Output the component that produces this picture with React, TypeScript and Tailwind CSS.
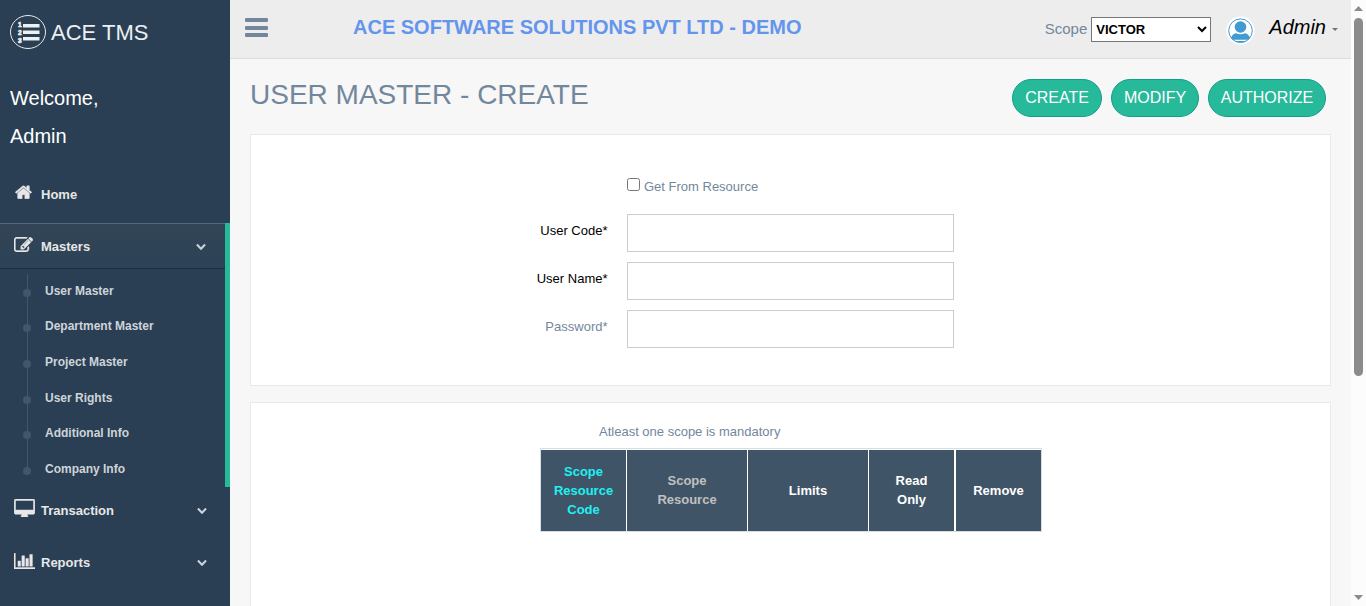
import React from "react";

type IconProps = { className?: string };

const HomeIcon = ({ className }: IconProps) => (
  <svg viewBox="64 188 1664 1380" preserveAspectRatio="none" className={className} fill="currentColor" stroke="currentColor" strokeWidth="40">
    <path d="M1472 992v480q0 26-19 45t-45 19h-384v-384h-256v384h-384q-26 0-45-19t-19-45v-480q0-1 .5-3t.5-3l575-474 575 474q1 2 1 6zm223-69l-62 74q-8 9-21 11h-3q-13 0-21-7l-692-577-692 577q-12 8-24 7-13-2-21-11l-62-74q-8-10-7-23.5t11-21.5l719-599q32-26 76-26t76 26l244 204v-195q0-14 9-23t23-9h192q14 0 23 9t9 23v408l219 182q10 8 11 21.5t-7 23.5z" />
  </svg>
);

const EditIcon = ({ className }: IconProps) => (
  <svg viewBox="0 128 1792 1408" className={className} fill="currentColor" stroke="currentColor" strokeWidth="40">
    <path d="M888 1184l116-116-152-152-116 116v56h96v96h56zm440-720q-16-16-33 1l-350 350q-17 17-1 33t33-1l350-350q17-17 1-33zm80 594v190q0 119-84.5 203.5t-203.5 84.5h-832q-119 0-203.5-84.5t-84.5-203.5v-832q0-119 84.5-203.5t203.5-84.5h832q63 0 117 25 15 7 18 23 3 17-9 29l-49 49q-14 14-32 8-23-6-45-6h-832q-66 0-113 47t-47 113v832q0 66 47 113t113 47h832q66 0 113-47t47-113v-126q0-13 9-22l64-64q15-15 35-7t20 29zm-96-738l288 288-672 672h-288v-288zm444 132l-92 92-288-288 92-92q28-28 68-28t68 28l152 152q28 28 28 68t-28 68z" />
  </svg>
);

const DesktopIcon = ({ className }: IconProps) => (
  <svg viewBox="0 0 1920 1664" className={className} fill="currentColor" stroke="currentColor" strokeWidth="50">
    <path d="M1792 992v-832q0-13-9.500-22.500t-22.500-9.500h-1600q-13 0-22.500 9.500t-9.500 22.500v832q0 13 9.500 22.500t22.500 9.500h1600q13 0 22.500-9.500t9.500-22.500zm128-832v1088q0 66-47 113t-113 47h-544q0 37 16 77.500t32 71 16 43.500q0 26-19 45t-45 19h-512q-26 0-45-19t-19-45q0-14 16-44t32-70 16-78h-544q-66 0-113-47t-47-113v-1088q0-66 47-113t113-47h1600q66 0 113 47t47 113z" />
  </svg>
);

const ChartIcon = ({ className }: IconProps) => (
  <svg viewBox="0 128 2048 1536" className={className} fill="currentColor" stroke="currentColor" strokeWidth="45">
    <path d="M640 896v512h-256v-512h256zm384-512v1024h-256v-1024h256zm1024 1152v128h-2048v-1536h128v1408h1920zm-640-896v768h-256v-768h256zm384-384v1152h-256v-1152h256z" />
  </svg>
);

const ChevronIcon = ({ className }: IconProps) => (
  <svg viewBox="90 533 1612 1035" className={`text-[#ccd3da] ${className}`} fill="currentColor">
    <path d="M1683 808l-742 741q-19 19-45 19t-45-19l-742-741q-19-19-19-45.500t19-45.500l166-165q19-19 45-19t45 19l531 531 531-531q19-19 45-19t45 19l166 165q19 19 19 45.500t-19 45.500z" />
  </svg>
);

const Logo = () => (
  <svg width="36" height="34" viewBox="0 0 36 34" fill="none" className="shrink-0">
    <ellipse cx="18" cy="17" rx="17.500" ry="16.500" stroke="#eaeaea" />
    <path d="M13 9h16.500v3.500H13zM13 15.500h16.500v3.500H13zM13 22h16.500v3.500H13z" fill="#ecf0f1" />
    <g fill="#ecf0f1" stroke="#ecf0f1" strokeWidth="0.6" fontFamily="Liberation Sans" fontWeight="700" fontSize="6.600">
      <text x="8" y="11.500">1</text>
      <text x="8" y="19.600">2</text>
      <text x="8" y="27.700">3</text>
    </g>
  </svg>
);

const Avatar = () => (
  <svg width="29" height="29" viewBox="0 0 29 29" className="shrink-0">
    <circle cx="14.500" cy="14.500" r="14" fill="#fff" />
    <circle cx="14.500" cy="14.700" r="11.800" fill="none" stroke="#3f9bd0" strokeWidth="1" />
    <circle cx="14.500" cy="11" r="5.800" fill="#3f9bd0" />
    <path d="M5 21.800q1.200-3.800 5-4.600 4.500 2.200 9 0 3.800.8 5 4.600l-1.500 1.900H6.500z" fill="#3f9bd0" />
    <path d="M8.500 25h12q-2.500 1.600-6 1.600T8.500 25z" fill="#3f9bd0" />
  </svg>
);

const submenu = ["User Master", "Department Master", "Project Master", "User Rights", "Additional Info", "Company Info"];

const Sidebar = () => (
  <aside className="flex h-full w-[230px] shrink-0 flex-col bg-[#2a3f54] text-white">
    <div className="flex h-[64px] items-center gap-[5px] pl-[10px] text-[22px] text-[#ecf0f1]">
      <Logo />
      <span>ACE TMS</span>
    </div>
    <div className="h-[107px] pt-[15px] pl-[10px] text-[20px] leading-[38px]">
      <p>Welcome,</p>
      <p>Admin</p>
    </div>
    <nav className="text-[13px] font-bold text-[#e7e7e7]">
      <div className="flex h-[52px] items-start pt-[14px] pl-[15px]">
        <HomeIcon className="h-[14px] w-[17px]" />
        <span className="ml-[9px] leading-[19px]">Home</span>
      </div>
      <div className="h-[264px] border-r-[5px] border-[#26b99a]">
        <div className="flex h-[46px] items-start border-t border-b border-t-[#54697a] border-b-[#1b2e41] bg-linear-to-b from-[#334556] to-[#2c4257] pt-[13px] pl-[14px]">
          <EditIcon className="h-[15px] w-[19px]" />
          <span className="ml-[8px] leading-[19px]">Masters</span>
          <ChevronIcon className="mt-[7px] mr-[19px] ml-auto h-[6px] w-[10px]" />
        </div>
        <ul className="relative pt-[4px] text-[12px] text-[#ced4d9]">
          <li className="absolute top-[5px] left-[27px] h-[197px] w-px bg-[#425668]" />
          {submenu.map((label) => (
            <li key={label} className="relative flex h-[35.600px] items-center pl-[23px]">
              <span className="mt-[4px] h-[8px] w-[8px] rounded-full bg-[#425668]" />
              <span className="ml-[14px]">{label}</span>
            </li>
          ))}
        </ul>
      </div>
      <div className="flex h-[52px] items-start pt-[14px] pl-[14px]">
        <DesktopIcon className="-mt-[2px] h-[18px] w-[21px]" />
        <span className="ml-[6px] leading-[19px]">Transaction</span>
        <ChevronIcon className="mt-[7px] mr-[23px] ml-auto h-[6px] w-[10px]" />
      </div>
      <div className="flex h-[52px] items-start pt-[14px] pl-[14px]">
        <ChartIcon className="h-[16px] w-[21px]" />
        <span className="ml-[6px] leading-[19px]">Reports</span>
        <ChevronIcon className="mt-[7px] mr-[23px] ml-auto h-[6px] w-[10px]" />
      </div>
    </nav>
  </aside>
);

const Header = () => (
  <header className="flex h-[59px] shrink-0 items-start border-b border-[#d9dee4] bg-[#ededed]">
    <div className="mt-[18px] ml-[15px] flex w-[23px] flex-col gap-[3.500px]">
      <span className="h-[4px] rounded-[1px] bg-[#73879c]" />
      <span className="h-[4px] rounded-[1px] bg-[#73879c]" />
      <span className="h-[4px] rounded-[1px] bg-[#73879c]" />
    </div>
    <h2 className="mt-[13px] ml-[85px] text-[20px] leading-[28px] font-bold text-[#6495ed]">
      ACE SOFTWARE SOLUTIONS PVT LTD - DEMO
    </h2>
    <div className="mr-[13px] ml-auto flex items-start">
      <span className="mt-[19px] text-[15px] leading-[20px]">Scope</span>
      <select className="mt-[17px] ml-[4px] h-[25px] w-[120px] border border-[#767676] bg-white text-[13px] font-bold text-black" defaultValue="VICTOR">
        <option>VICTOR</option>
      </select>
      <div className="mt-[16px] ml-[15px]">
        <Avatar />
      </div>
      <span className="mt-[14px] ml-[14px] text-[20px] leading-[26px] text-black italic">Admin</span>
      <svg width="6" height="3" viewBox="0 0 6 3" className="mt-[28px] ml-[6px]" fill="#6b7683">
        <path d="M0 0h6L3 3z" />
      </svg>
    </div>
  </header>
);

const ActionButton = ({ label, width }: { label: string; width: string }) => (
  <button className={`h-[38px] rounded-[30px] border border-[#169f85] bg-[#26b99a] text-[16px] text-white ${width}`}>
    {label}
  </button>
);

const Field = ({ label, tone }: { label: string; tone: string }) => (
  <div className="flex h-[38px]">
    <label className={`mt-[7px] w-[356.500px] text-right leading-[20px] ${tone}`}>{label}</label>
    <input className="ml-[19.500px] h-[38px] w-[327px] border border-[#ccc] bg-white" />
  </div>
);

const columns = [
  { label: "Scope Resource Code", style: "w-[85px] px-[8px] text-[#1ff0f0]" },
  { label: "Scope Resource", style: "w-[121px] px-[20px] pb-[2px] text-[#c0c0c0] border-l border-white" },
  { label: "Limits", style: "w-[121px] text-white border-l border-white" },
  { label: "Read Only", style: "w-[86px] px-[20px] pb-[2px] text-white border-l border-white" },
  { label: "Remove", style: "w-[87px] text-white border-l-2 border-white" },
];

const ScrollBar = () => (
  <div className="flex h-full w-[15px] shrink-0 flex-col items-center bg-[#fcfcfc]">
    <svg width="9" height="5" viewBox="0 0 9 5" className="mt-[6px]" fill="#8b8b8b">
      <path d="M4.500 0L9 5H0z" />
    </svg>
    <div className="mt-[7px] h-[358px] w-[9px] rounded-full bg-[#8b8b8b]" />
    <svg width="9" height="5" viewBox="0 0 9 5" className="mt-auto mb-[6px]" fill="#8b8b8b">
      <path d="M4.500 5L9 0H0z" />
    </svg>
  </div>
);

export default function App() {
  return (
    <div className="flex h-[606px] w-[1366px] overflow-hidden bg-[#f7f7f7] font-['Liberation_Sans',Arial,sans-serif] text-[13px] text-[#73879c]">
      <Sidebar />
      <div className="flex min-w-0 flex-1 flex-col">
        <Header />
        <main className="flex flex-col pr-[20px] pl-[20px]">
          <div className="flex h-[75px] items-start">
            <h1 className="mt-[17px] text-[28px] leading-[38px]">USER MASTER - CREATE</h1>
            <div className="mt-[20px] mr-[5px] ml-auto flex gap-[9px]">
              <ActionButton label="CREATE" width="w-[90px]" />
              <ActionButton label="MODIFY" width="w-[88px]" />
              <ActionButton label="AUTHORIZE" width="w-[118px]" />
            </div>
          </div>
          <section className="flex h-[252px] flex-col border border-[#e6e9ed] bg-white">
            <label className="mt-[41px] ml-[376px] flex h-[20px] items-start">
              <input type="checkbox" className="mt-[2px] h-[13px] w-[13px]" />
              <span className="mt-px ml-[4px] leading-[20px]">Get From Resource</span>
            </label>
            <div className="mt-[18px] flex flex-col gap-[10px]">
              <Field label="User Code*" tone="text-black" />
              <Field label="User Name*" tone="text-black" />
              <Field label="Password*" tone="text-[#73879c]" />
            </div>
          </section>
          <section className="mt-[16px] h-[300px] border border-[#e6e9ed] bg-white">
            <p className="mt-[19px] ml-[348px] leading-[19px]">Atleast one scope is mandatory</p>
            <div className="mt-[7px] ml-[289px] h-[84px] w-[502px] border border-[#d3dfe4] bg-white pt-px text-center leading-[19px] font-bold">
              <div className="flex h-[81px] bg-[#405467]">
                {columns.map((c) => (
                  <div key={c.label} className={`flex items-center justify-center ${c.style}`}>
                    <span>{c.label}</span>
                  </div>
                ))}
              </div>
            </div>
          </section>
        </main>
      </div>
      <ScrollBar />
    </div>
  );
}
